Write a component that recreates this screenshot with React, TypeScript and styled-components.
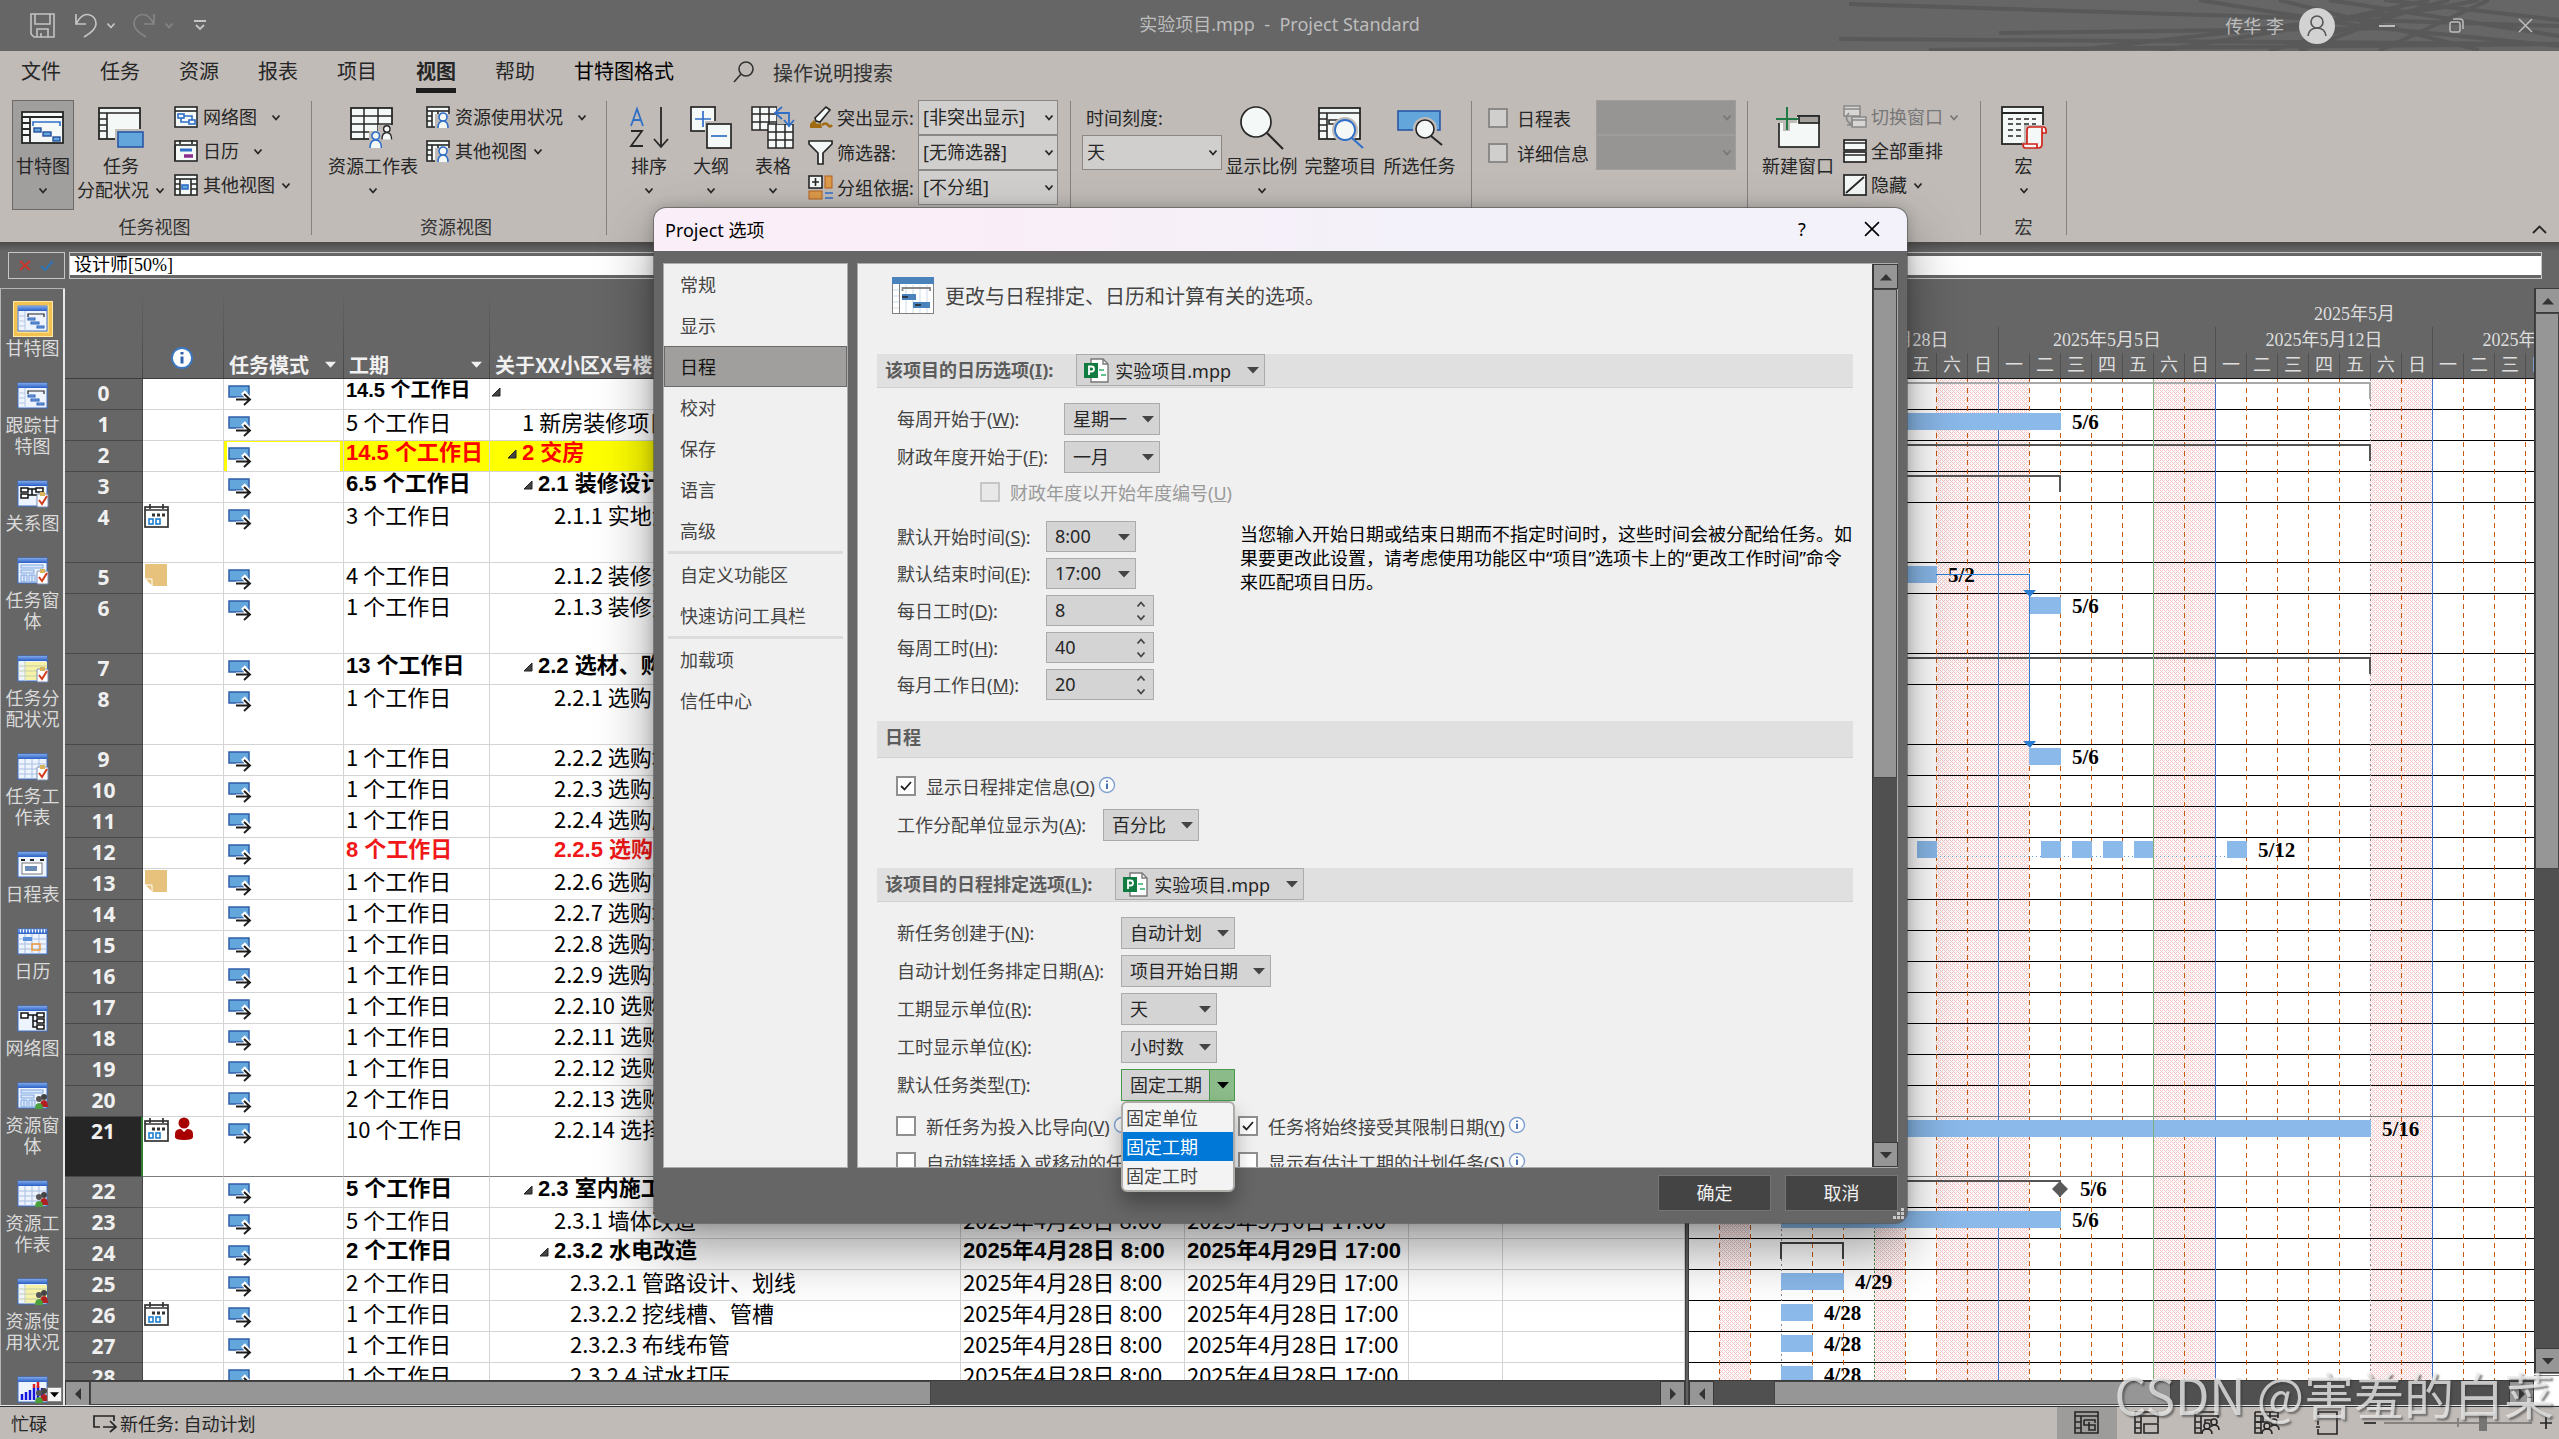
import React, { Fragment, ReactNode, useId } from 'react';
import styled, { createGlobalStyle, css } from 'styled-components';

const ui = '"Noto Sans", "Noto Sans CJK SC", sans-serif';
const sheetFont = '"Noto Sans CJK SC", sans-serif';
const sheetBold = '"Liberation Sans", "Noto Sans CJK SC", sans-serif';
const song = '"Liberation Serif", "Noto Sans CJK SC", serif';

const Global = createGlobalStyle`
  *, *::before, *::after { box-sizing: border-box; }
  html, body { margin: 0; height: 100%; background: #666; }
  body { font-family: ${ui}; font-size: 18px; color: #262626; overflow: hidden; }
  button, input, select { font: inherit; color: inherit; margin: 0; }
  button { border: 0; background: none; padding: 0; cursor: default; }
  svg { display: block; flex: none; }
`;

const App_ = styled.div`
  position: relative;
  height: 100vh;
  min-height: 900px;
  display: flex;
  flex-direction: column;
  background: #666;
  overflow: hidden;
`;

/* ---------- title bar ---------- */

const TitleBar = styled.header`
  position: relative;
  height: 51px;
  flex: none;
  display: grid;
  grid-template-columns: 1fr auto 1fr;
  align-items: center;
  background: #666;
  color: #bdbdbd;
`;
const TitleLines = styled.svg`
  position: absolute;
  right: 0;
  top: 0;
`;
const QuickAccess = styled.div`
  display: flex;
  align-items: center;
  padding-left: 30px;
`;
const QuickButton = styled.button<{ $gap?: number; $dim?: boolean }>`
  margin-right: ${p => p.$gap ?? 8}px;
  color: ${p => (p.$dim ? '#858585' : '#c4c4c4')};
`;
const WindowTitle = styled.h1`
  margin: 0;
  padding-bottom: 4px;
  font-size: 18px;
  font-weight: 400;
  line-height: 24px;
  white-space: pre;
`;
const Account = styled.div`
  position: relative;
  display: flex;
  align-items: center;
  justify-content: flex-end;
  padding-right: 26px;
`;
const AccountName = styled.span`
  margin-right: 15px;
  padding-bottom: 2px;
`;
const WindowButton = styled.button`
  width: 16px;
  height: 24px;
  margin-left: 53px;
  color: #bdbdbd;
  display: flex;
  align-items: center;
  justify-content: center;
  &:first-of-type { margin-left: 44px; }
`;

/* ---------- ribbon ---------- */

const Ribbon = styled.section`
  flex: none;
  height: 191px;
  background: #c0bbb7;
  display: flex;
  flex-direction: column;
`;
const Tabs = styled.nav`
  height: 42px;
  flex: none;
  display: flex;
  align-items: stretch;
  padding-left: 21px;
  font-size: 20px;
`;
const Tab = styled.button<{ $active?: boolean; $dark?: boolean }>`
  margin-right: 39px;
  line-height: 33px;
  padding-top: 4px;
  align-self: flex-start;
  height: 42px;
  font-weight: ${p => (p.$active ? 700 : 400)};
  color: ${p => (p.$dark ? '#000' : '#262626')};
  border-bottom: 5px solid ${p => (p.$active ? '#1c1c1c' : 'transparent')};
`;
const TellMe = styled.button`
  display: flex;
  align-items: center;
  gap: 19px;
  margin-left: 20px;
  color: #333;
`;
const RibbonBody = styled.div`
  flex: 1;
  display: flex;
  padding: 7px 12px 0;
`;
const Group = styled.div<{ $left?: number; $right?: number }>`
  display: flex;
  flex-direction: column;
  align-items: center;
  padding-left: ${p => p.$left ?? 0}px;
  padding-right: ${p => p.$right ?? 0}px;
`;
const GroupBody = styled.div`
  display: flex;
  height: 110px;
  width: 100%;
`;
const GroupName = styled.div`
  margin-top: 6px;
  line-height: 22px;
  color: #333;
`;
const Rule = styled.div`
  width: 1px;
  height: 134px;
  margin-top: 1px;
  background: #858280;
`;
const BigButton = styled.button<{ $w: number; $on?: boolean }>`
  width: ${p => p.$w}px;
  height: 110px;
  padding-top: 6px;
  display: flex;
  flex-direction: column;
  align-items: center;
  line-height: 24px;
  white-space: nowrap;
  ${p => p.$on && css`
    background: #a09f9d;
    box-shadow: inset 0 0 0 1px #6c6b6a;
  `}
`;
const BigIcon = styled.span`
  height: 44px;
  margin-bottom: 4px;
  display: flex;
  align-items: center;
`;
const BigSecond = styled.span`
  display: flex;
  align-items: center;
  gap: 6px;
  height: 24px;
`;
const SmallColumn = styled.div<{ $left: number; $right?: number }>`
  display: flex;
  flex-direction: column;
  padding-left: ${p => p.$left}px;
  padding-right: ${p => p.$right ?? 0}px;
`;
const SmallButton = styled.button<{ $wide?: boolean; $disabled?: boolean }>`
  height: 34px;
  display: flex;
  align-items: center;
  white-space: nowrap;
  color: ${p => (p.$disabled ? '#777' : 'inherit')};
  > span { margin: 0 ${p => (p.$wide ? 14 : 6)}px 2px 4px; }
`;
const FieldLine = styled.div`
  height: 35px;
  display: flex;
  align-items: center;
`;
const FieldLabel = styled.label<{ $w?: number }>`
  margin: 0 0 2px 4px;
  white-space: nowrap;
  width: ${p => (p.$w ? p.$w + 'px' : 'auto')};
`;
const TickLabel = styled.label`
  height: 35px;
  width: 108px;
  display: flex;
  align-items: center;
  gap: 9px;
  white-space: nowrap;
`;
const RibbonTick = styled.input`
  appearance: none;
  width: 20px;
  height: 20px;
  margin: 0;
  background: #d0cfcd;
  border: 2px solid #8c8a88;
`;
const Stack = styled.span`
  display: grid;
  align-items: center;
  > * { grid-area: 1 / 1; }
  > svg { pointer-events: none; }
`;
const ArrowAt = styled.span<{ $right: number }>`
  justify-self: end;
  margin-right: ${p => p.$right}px;
  pointer-events: none;
`;
const RibbonSelect = styled.select`
  appearance: none;
  width: 140px;
  height: 35px;
  padding: 0 20px 2px 4px;
  border: 1px solid #8a8886;
  border-radius: 0;
  background: #d0cfcd;
  &:disabled { background: #979593; border-color: #a09e9c; opacity: 1; }
`;
const CollapseRibbon = styled.button`
  margin-left: auto;
  align-self: flex-end;
  padding-bottom: 8px;
`;

/* ---------- entry bar ---------- */

const EntryBar = styled.div`
  flex: none;
  height: 46px;
  padding: 10px 17px 0 8px;
  display: flex;
  gap: 4px;
  background: linear-gradient(#4c4c4c, #666 9px);
`;
const EntryActions = styled.div`
  width: 57px;
  height: 27px;
  border: 1px solid #c6c6c6;
  display: flex;
  align-items: center;
  justify-content: space-around;
  padding: 0 5px;
`;
const EntryFrame = styled.div`
  flex: 1;
  height: 27px;
  padding: 3px 0;
  border: 1px solid #c6c6c6;
  display: flex;
`;
const EntryInput = styled.input`
  flex: 1;
  border: 0;
  padding: 0 4px;
  background: #fff;
  color: #000;
  font-family: ${song};
  font-size: 18px;
  line-height: 19px;
`;

/* ---------- work area ---------- */

const Work = styled.main`
  flex: 1;
  min-height: 0;
  display: flex;
`;
const ViewBar = styled.nav`
  position: relative;
  flex: none;
  width: 65px;
  padding-top: 16px;
  border: solid #b4b4b4;
  border-width: 1px 0 0 1px;
  box-shadow: inset -2px 0 #e9e9e9;
  overflow: hidden;
  background: #666;
`;
const ViewItem = styled.button<{ $on?: boolean }>`
  width: 63px;
  padding: 0 4px 22px;
  display: flex;
  flex-direction: column;
  align-items: center;
  gap: 6px;
  font-family: ${song};
  font-size: 18px;
  line-height: 21px;
  color: #dadada;
  > svg {
    ${p => p.$on && css`box-shadow: 0 0 0 3px #f3c14f, 0 0 0 4px #fde9a9; background: #fce08a;`}
  }
`;
const ViewMore = styled.button`
  position: absolute;
  right: 3px;
  bottom: 3px;
  width: 15px;
  height: 15px;
  border: 1px solid #888;
  background: #f5f5f5;
  display: flex;
  align-items: center;
  justify-content: center;
`;
const SheetPane = styled.section`
  flex: 0 1 1620px;
  min-width: 0;
  display: flex;
  flex-direction: column;
`;
const Clip = styled.div`
  flex: 1;
  min-height: 0;
  overflow: hidden;
  background: #fff;
`;
const Sheet = styled.table`
  width: 100%;
  table-layout: fixed;
  border-collapse: separate;
  border-spacing: 0;
  font-family: ${sheetFont};
  font-size: 22px;
  line-height: 23px;
  color: #000;
`;
const HeadCell = styled.th`
  height: 91px;
  padding: 0 8px 1px 5px;
  vertical-align: bottom;
  text-align: left;
  font-size: 20px;
  font-weight: 700;
  color: #f0f0f0;
  background: #666;
  border-bottom: 1px solid #3c3c3c;
  background-image: linear-gradient(#666, #484848);
  background-size: 1px 100%;
  background-repeat: no-repeat;
  background-position: right top;
  white-space: nowrap;
`;
const HeadFlex = styled.span<{ $center?: boolean }>`
  display: flex;
  align-items: center;
  justify-content: ${p => (p.$center ? 'center' : 'space-between')};
  min-height: 26px;
  padding-bottom: ${p => (p.$center ? 8 : 0)}px;
`;
const TaskRow = styled.tr<{ $tall?: boolean; $bold?: boolean; $color?: string; $fill?: string; $active?: boolean; $root?: boolean }>`
  > * { height: ${p => (p.$tall ? 60 : 31)}px; }
  > td {
    border-bottom-color: ${p => (p.$active ? '#7c7c7c' : '#d4d4d4')};
    color: ${p => p.$color ?? '#000'};
    font-family: ${p => (p.$bold ? sheetBold : sheetFont)};
    font-weight: ${p => (p.$bold ? 700 : 400)};
    font-size: ${p => (p.$root ? 20 : 22)}px;
    background: ${p => p.$fill ?? '#fff'};
  }
`;
const RowHead = styled.th<{ $active?: boolean }>`
  padding: 2px 0 0;
  vertical-align: top;
  text-align: center;
  font-family: ${ui};
  font-size: 21px;
  font-weight: 700;
  line-height: 25px;
  color: #f0f0f0;
  background: ${p => (p.$active ? '#262626' : '#666')};
  border-bottom: 1px solid #484848;
  border-right: ${p => (p.$active ? '2px solid #2f7d32' : '1px solid #484848')};
`;
const Cell = styled.td<{ $indent?: number }>`
  padding: 0 0 0 ${p => p.$indent ?? 3}px;
  vertical-align: top;
  white-space: nowrap;
  border-right: 1px solid #d4d4d4;
  border-bottom: 1px solid #d4d4d4;
`;
const PlainCell = styled(Cell)`
  && { background: #fff; }
`;
const ModeCell = styled(Cell)<{ $lit?: boolean }>`
  && { background: #fff; }
  ${p => p.$lit && css`box-shadow: inset 3px 1px #ffff00, inset -3px 0 #ffff00;`}
`;
const CellIcons = styled.span<{ $top?: number }>`
  display: flex;
  align-items: flex-start;
  gap: 5px;
  padding-top: ${p => p.$top ?? 0}px;
`;
const NameLine = styled.span`
  display: flex;
  align-items: center;
`;
const Toggle = styled.span`
  width: 14px;
  height: 23px;
  padding-top: 3px;
  display: flex;
  align-items: center;
`;

const HBar = styled.div`
  flex: none;
  height: 25px;
  display: flex;
  background: #505050;
  border-top: 1px solid #3a3a3a;
`;
const VBar = styled.div`
  flex: none;
  width: 25px;
  display: flex;
  flex-direction: column;
  background: #505050;
  border-left: 1px solid #3a3a3a;
`;
const ScrollButton = styled.button`
  flex: none;
  width: 25px;
  height: 25px;
  background: #969696;
  border: 1px solid #3a3a3a;
  display: flex;
  align-items: center;
  justify-content: center;
`;
const Track = styled.div<{ $grow: number; $thumb?: boolean }>`
  flex: ${p => p.$grow} 1 0;
  background: ${p => (p.$thumb ? '#969696' : '#505050')};
  box-shadow: ${p => (p.$thumb ? 'inset 0 0 0 1px #444' : 'none')};
`;
const Splitter = styled.div`
  flex: none;
  width: 4px;
  background: #606060;
  box-shadow: inset 1px 0 #404040, inset -1px 0 #404040;
`;
const GanttPane = styled.section`
  flex: 1;
  min-width: 0;
  display: flex;
`;
const GanttMain = styled.div`
  flex: 1;
  min-width: 0;
  display: flex;
  flex-direction: column;
`;
const GanttSide = styled.div`
  display: flex;
  flex-direction: column;
  > :first-child { flex: 1; }
`;
const SideCorner = styled.div`
  height: 32px;
  background: #fff;
  border-top: 3px double #777;
`;
const Timescale = styled.div`
  flex: none;
  height: 91px;
  padding-top: 13px;
  overflow: hidden;
  background: #666;
  border-bottom: 1px solid #111;
  font-family: ${song};
  color: #dedede;
`;
const ScaleTier = styled.div<{ $h: number; $left?: number }>`
  display: flex;
  height: ${p => p.$h}px;
  line-height: ${p => p.$h}px;
  padding-left: ${p => p.$left ?? 0}px;
`;
const ScaleCell = styled.div<{ $w: number; $tick?: boolean }>`
  flex: none;
  width: ${p => p.$w}px;
  text-align: center;
  white-space: nowrap;
  border-right: ${p => (p.$tick ? '1px solid #505050' : '0')};
`;
const Chart = styled.svg`
  width: 100%;
  height: 1015px;
`;
const BarLabel = styled.text`
  font-family: "Liberation Serif", serif;
  font-size: 21px;
  font-weight: 700;
  fill: #000;
`;

/* ---------- status bar ---------- */

const StatusBar = styled.footer`
  flex: none;
  height: 34px;
  display: flex;
  align-items: center;
  padding-left: 10px;
  background: #c0bbb7;
  border-top: 1px solid #e8e8e8;
  box-shadow: inset 0 1px #333;
`;
const StatusText = styled.span<{ $right?: number }>`
  margin-right: ${p => p.$right ?? 0}px;
  margin-left: 1px;
  white-space: nowrap;
`;
const StatusViews = styled.div`
  margin-left: auto;
  display: flex;
  align-self: stretch;
  padding-top: 1px;
`;
const StatusView = styled.button<{ $on?: boolean }>`
  width: 60px;
  display: flex;
  align-items: center;
  justify-content: center;
  background: ${p => (p.$on ? '#9e9c9a' : 'transparent')};
`;
const Zoom = styled.div`
  display: flex;
  align-items: center;
  gap: 8px;
  padding: 0 7px 0 7px;
`;
const ZoomRange = styled.input`
  appearance: none;
  width: 148px;
  height: 18px;
  background: linear-gradient(#85827f, #85827f) center / 100% 2px no-repeat,
    linear-gradient(#85827f, #85827f) center / 2px 9px no-repeat;
  &::-webkit-slider-thumb { appearance: none; width: 8px; height: 17px; background: #777573; }
`;
const Watermark = styled.div`
  position: absolute;
  right: 5px;
  bottom: 11px;
  font-family: ${sheetFont};
  font-size: 50px;
  line-height: 70px;
  color: rgba(235, 235, 235, 0.78);
  text-shadow: 2px 2px 2px rgba(60, 60, 60, 0.6);
  white-space: nowrap;
  pointer-events: none;
`;

/* ---------- dialog ---------- */

const Overlay = styled.div`
  position: absolute;
  inset: 0;
  display: flex;
  align-items: center;
  justify-content: center;
  padding: 0 0 8px 2px;
`;
const Dialog = styled.div`
  position: relative;
  width: 1253px;
  height: 1015px;
  display: flex;
  flex-direction: column;
  border-radius: 12px;
  background: #666;
  box-shadow: 0 0 0 1px rgba(80, 80, 80, 0.6), 0 26px 56px rgba(0, 0, 0, 0.4), 0 0 14px rgba(0, 0, 0, 0.2);
`;
const DialogTitle = styled.div`
  flex: none;
  height: 43px;
  display: flex;
  align-items: center;
  padding: 0 26px 2px 11px;
  border-radius: 12px 12px 0 0;
  background: linear-gradient(90deg, #faeef8 0 24%, #f3f1f9 60%);
  color: #000;
`;
const DialogName = styled.h2`
  margin: 0 auto 0 0;
  font-size: 18px;
  font-weight: 400;
`;
const DialogButton = styled.button`
  width: 18px;
  margin-left: 52px;
  display: flex;
  justify-content: center;
`;
const DialogBody = styled.div`
  height: 917px;
  padding: 12px 9px 0;
  display: flex;
  gap: 9px;
`;
const Nav = styled.nav`
  width: 185px;
  border: 1px solid #ababab;
  background: #f0f0f0;
  display: flex;
  flex-direction: column;
  color: #444;
`;
const NavItem = styled.button<{ $on?: boolean }>`
  height: 41px;
  padding: 0 0 2px 16px;
  text-align: left;
  ${p => p.$on && css`
    background: #a09f9d;
    box-shadow: inset 0 0 0 1px #6a6a6a;
    color: #111;
  `}
`;
const NavRule = styled.hr`
  height: 3px;
  margin: 0 4px;
  border: 0;
  background: #dcdcdc;
`;
const Panel = styled.div`
  flex: 1;
  min-width: 0;
  display: flex;
  border: 1px solid #ababab;
  background: #f0f0f0;
`;
const PanelScroll = styled.div`
  flex: 1;
  min-width: 0;
  overflow: hidden;
  padding: 13px 19px 0;
  color: #444;
`;
const Intro = styled.div`
  display: flex;
  align-items: center;
  gap: 11px;
  margin: 0 0 40px 15px;
  height: 37px;
  font-size: 20px;
`;
const Section = styled.div<{ $h: number; $top?: number }>`
  height: ${p => p.$h}px;
  margin-top: ${p => p.$top ?? 0}px;
  padding-left: 8px;
  display: flex;
  align-items: flex-start;
  gap: 23px;
  background: #e0e0e0;
  border-bottom: 1px solid #d2d2d2;
  color: #5c5c5c;
  line-height: 32px;
`;
const SectionLabel = styled.label`
  font-weight: 700;
`;
const SectionTitle = styled.h3`
  margin: 0;
  font-size: 18px;
  font-weight: 700;
`;
const Fields = styled.div<{ $top: number }>`
  display: flex;
  flex-direction: column;
  gap: 6px;
  padding-left: 20px;
  padding-top: ${p => p.$top}px;
`;
const Field = styled.div<{ $label: number }>`
  display: grid;
  grid-template-columns: ${p => p.$label}px auto;
  justify-content: start;
  align-items: center;
  > label { padding-bottom: 2px; }
`;
const FieldSplit = styled.div`
  display: flex;
  justify-content: space-between;
`;
const Note = styled.p`
  margin: 20px 0 0;
  width: 613px;
  line-height: 24px;
  color: #000;
`;
const Drop = styled.select<{ $w: number; $h: number; $icon?: boolean; $open?: boolean }>`
  appearance: none;
  width: ${p => p.$w}px;
  height: ${p => p.$h}px;
  padding: 0 20px 1px ${p => (p.$icon ? 38 : 8)}px;
  border: 1px solid ${p => (p.$open ? '#479a4b' : '#ababab')};
  border-radius: 0;
  background: ${p => (p.$open ? 'linear-gradient(90deg, #d4d4d4 calc(100% - 25px), #479a4b calc(100% - 25px) calc(100% - 24px), #8abb88 calc(100% - 24px))' : '#d4d4d4')};
  color: #262626;
  font-weight: 400;
`;
const IconAt = styled.span`
  margin-left: 8px;
  pointer-events: none;
`;
const Spin = styled.input`
  appearance: textfield;
  width: 108px;
  height: 31px;
  padding: 0 24px 1px 8px;
  border: 1px solid #ababab;
  background: #d4d4d4;
  color: #262626;
  &::-webkit-inner-spin-button { display: none; }
`;
const CheckLine = styled.div<{ $top: number; $left?: number }>`
  display: flex;
  margin: ${p => p.$top}px 0 0 ${p => p.$left ?? 19}px;
`;
const CheckItem = styled.label<{ $w?: number; $disabled?: boolean }>`
  width: ${p => (p.$w ? p.$w + 'px' : 'auto')};
  height: 20px;
  display: flex;
  align-items: center;
  white-space: nowrap;
  color: ${p => (p.$disabled ? '#999' : '#444')};
  > span:nth-of-type(2) { margin: 0 3px 0 10px; }
`;
const Box = styled.input`
  appearance: none;
  width: 20px;
  height: 20px;
  border: 2px solid #8f8f8f;
  background: #fff;
  &:disabled { background: #e8e8e8; border-color: #c6c6c6; }
`;
const Tip = styled.span`
  align-self: flex-start;
`;
const PopupAnchor = styled.div`
  display: flex;
  flex-direction: column;
`;
const Popup = styled.div`
  position: absolute;
  margin-top: 32px;
  width: 114px;
  padding: 0;
  border: 2px solid #aeaca9;
  border-radius: 6px;
  background: #f3f3f3;
  box-shadow: 0 12px 20px rgba(0, 0, 0, 0.3);
  display: flex;
  flex-direction: column;
  z-index: 2;
`;
const PopupOption = styled.button<{ $on?: boolean }>`
  height: 29px;
  padding: 0 0 2px 3px;
  text-align: left;
  background: ${p => (p.$on ? '#0078d7' : 'transparent')};
  color: ${p => (p.$on ? '#fff' : '#444')};
`;
const DialogFooter = styled.div`
  display: flex;
  justify-content: flex-end;
  gap: 14px;
  padding: 7px 9px 0;
`;
const FooterButton = styled.button`
  width: 113px;
  height: 36px;
  padding-bottom: 2px;
  background: #444;
  border: 1px solid #757575;
  color: #f0f0f0;
`;
const Grip = styled.svg`
  position: absolute;
  right: 2px;
  bottom: 3px;
`;

/* ---------- glyphs ---------- */

const INK = '#262626';
const PAPER = '#f4f8f7';
const BLUE = '#2f6fc8';

const Caret = ({ c = 'currentColor', up = false }: { c?: string; up?: boolean }) => (
  <svg width="10" height="7" viewBox="0 0 10 7">
    <path d={up ? 'M1.5 5.5 5 1.5 8.5 5.5' : 'M1.5 1.5 5 5.5 8.5 1.5'} fill="none" stroke={c} strokeWidth="1.8" />
  </svg>
);
const Tri = ({ dir = 'down', c = '#333', s = 12 }: { dir?: string; c?: string; s?: number }) => {
  const d: Record<string, string> = { down: 'M0 3H12L6 9.5Z', up: 'M0 9.5H12L6 3Z', left: 'M9 0V12L3 6Z', right: 'M3 0V12L9 6Z' };
  return <svg width={s} height={s} viewBox="0 0 12 12"><path d={d[dir]} fill={c} /></svg>;
};
const Cross = ({ s = 15 }: { s?: number }) => (
  <svg width={s} height={s} viewBox="0 0 15 15"><path d="M1 1 14 14M14 1 1 14" stroke="currentColor" strokeWidth="1.5" /></svg>
);

const GanttBig = () => (
  <svg width="44" height="34" viewBox="0 0 44 34">
    <rect x="1" y="1" width="41" height="31" fill={PAPER} stroke={INK} strokeWidth="1.8" />
    <path d="M1 6H42M9 6V32M1 12H9M1 18H9M1 24H9" stroke={INK} strokeWidth="1.8" fill="none" />
    <path d="M12 15V11H39V15" fill="none" stroke={BLUE} strokeWidth="1.6" />
    <g fill="#62a6dc" stroke="#24509c" strokeWidth="1.4"><rect x="13" y="17" width="7" height="4" /><rect x="22" y="21" width="8" height="4" /><rect x="32" y="26" width="7" height="4" /></g>
  </svg>
);
const UsageBig = () => (
  <svg width="46" height="42" viewBox="0 0 46 42">
    <rect x="1" y="1" width="41" height="31" fill={PAPER} stroke={INK} strokeWidth="1.8" />
    <path d="M1 6H42M9 6V32M1 12H9M1 18H9M1 24H9" stroke={INK} strokeWidth="1.6" />
    <path d="M17 22H46V42H17Z" fill="#c0bbb7" /><rect x="20" y="25" width="25" height="15" fill="#62a6dc" stroke="#2a58a5" strokeWidth="1.6" />
  </svg>
);
const People = ({ x, y, c, s = 1 }: { x: number; y: number; c: string; s?: number }) => (
  <g transform={`translate(${x} ${y}) scale(${s})`} fill={PAPER} stroke={c} strokeWidth="1.7">
    <circle cx="6" cy="5" r="4" /><path d="M0 18C0 12 2 9.500 6 9.500S12 12 12 18" />
  </g>
);
const ResourceSheetBig = () => (
  <svg width="46" height="42" viewBox="0 0 46 42">
    <rect x="1" y="1" width="41" height="31" fill={PAPER} stroke={INK} strokeWidth="1.8" />
    <path d="M1 9H42M1 17H42M1 25H42M14 1V32M28 1V32" stroke={INK} strokeWidth="1.5" />
    <path d="M19 24H28V18H46V42H19Z" fill="#c0bbb7" />
    <People x={32} y={18} c={INK} s={0.8} /><People x={20} y={24} c={BLUE} s={0.95} />
  </svg>
);
const SortBig = () => (
  <svg width="42" height="44" viewBox="0 0 42 44" fill="none" strokeWidth="1.8">
    <path d="M3 20 9 3 15 20M5 14H13" stroke={BLUE} /><path d="M3 25H14L3 40H15" stroke={INK} />
    <path d="M33 1V41M26 33 33 41 40 33" stroke={INK} />
  </svg>
);
const OutlineBig = () => (
  <svg width="44" height="44" viewBox="0 0 44 44" strokeWidth="1.7">
    <rect x="2" y="1" width="24" height="24" fill={PAPER} stroke={INK} /><path d="M14 5V21M6 13H22" stroke={BLUE} />
    <path d="M16 15H30V44H16Z" fill="#c0bbb7" /><rect x="18" y="18" width="24" height="24" fill={PAPER} stroke={INK} /><path d="M22 30H38" stroke={BLUE} />
  </svg>
);
const TablesBig = () => (
  <svg width="44" height="44" viewBox="0 0 44 44" strokeWidth="1.5">
    <rect x="1" y="1" width="25" height="23" fill={PAPER} stroke={INK} /><path d="M1 8H26M1 16H26M9 1V24M18 1V24" stroke={INK} />
    <rect x="17" y="18" width="25" height="24" fill={PAPER} stroke={INK} /><path d="M17 26H42M17 34H42M25 18V42M34 18V42" stroke={INK} />
    <path d="M26 0H44V18H26Z" fill="#c0bbb7" /><path d="M24 7H38V19M31 1 24 7 31 13M33 14 38 20 43 14" fill="none" stroke={BLUE} strokeWidth="1.8" />
  </svg>
);
const ZoomBig = () => (
  <svg width="46" height="46" viewBox="0 0 46 46"><circle cx="17" cy="17" r="15" fill={PAPER} stroke={INK} strokeWidth="1.7" /><path d="M28 28 44 44" stroke={INK} strokeWidth="2" /></svg>
);
const WholeBig = () => (
  <svg width="46" height="42" viewBox="0 0 46 42">
    <rect x="1" y="1" width="41" height="31" fill={PAPER} stroke={INK} strokeWidth="1.8" />
    <path d="M1 6H42M9 6V32M1 12H9M1 18H9M1 24H9M11 13H20V17H11Z" stroke={INK} strokeWidth="1.6" fill="none" />
    <circle cx="27" cy="23" r="13" fill="#c0bbb7" /><circle cx="27" cy="23" r="10" fill={PAPER} stroke={BLUE} strokeWidth="1.8" /><path d="M34 31 45 41" stroke={BLUE} strokeWidth="2" />
  </svg>
);
const SelectedBig = () => (
  <svg width="46" height="36" viewBox="0 0 46 36">
    <rect x="1" y="1" width="42" height="19" fill="#62a6dc" stroke="#2a58a5" strokeWidth="1.6" />
    <circle cx="28" cy="19" r="12" fill="#c0bbb7" /><circle cx="28" cy="19" r="9" fill={PAPER} stroke={INK} strokeWidth="1.6" /><path d="M34 26 45 35" stroke={INK} strokeWidth="2" />
  </svg>
);
const NewWindowBig = () => (
  <svg width="46" height="42" viewBox="0 0 46 42">
    <rect x="4" y="9" width="40" height="31" fill={PAPER} stroke={INK} strokeWidth="1.7" /><rect x="24" y="9" width="20" height="7" fill="#a5a19e" stroke={INK} strokeWidth="1.7" />
    <path d="M0 0H22V16H15V24H8V16H0Z" fill="#c0bbb7" /><path d="M12 0V23M1 12H23" stroke="#1f7a45" strokeWidth="2" />
  </svg>
);
const MacroBig = () => (
  <svg width="46" height="44" viewBox="0 0 46 44">
    <rect x="1" y="1" width="41" height="37" fill={PAPER} stroke={INK} strokeWidth="1.8" /><path d="M1 7H42" stroke={INK} strokeWidth="2" />
    <path d="M7 13H35M7 18H35M7 24H35M7 30H22" stroke={INK} strokeWidth="1.6" strokeDasharray="5 3" />
    <path d="M23 19H46V44H21V36H23Z" fill="#c0bbb7" /><path d="M26 38V24Q26 21 29 21H42Q45 21 45 24V27H41V38Q41 42 37 42H24Q22 42 22 38H36V42M41 27V22" fill={PAPER} stroke="#d0241b" strokeWidth="1.7" />
  </svg>
);

const SmallFrame = ({ children, top = 5 }: { children?: ReactNode; top?: number }) => (
  <svg width="25" height="23" viewBox="0 0 25 23" strokeWidth="1.6" fill="none">
    <rect x="1" y="1" width="22" height="20" fill={PAPER} stroke={INK} /><path d={`M1 ${top}H23`} stroke={INK} />{children}
  </svg>
);
const NetSmall = () => <SmallFrame><g stroke={BLUE}><rect x="4" y="8" width="6" height="4" /><rect x="15" y="14" width="6" height="4" /><path d="M7 12V16H15M10 10H18V14" /></g></SmallFrame>;
const CalSmall = () => <SmallFrame><path d="M6 0V4M18 0V4M1 5V21" stroke={INK} /><path d="M6 10H18" stroke={BLUE} strokeWidth="3" /><path d="M10 16H19" stroke="#8a2d8f" strokeWidth="3.500" /></SmallFrame>;
const OtherSmall = () => <SmallFrame><path d="M6 5V21M17 5V21M17 10H23M17 15H23M1 10H6M1 15H6" stroke={INK} /><rect x="8" y="11" width="6" height="4" fill="#62a6dc" stroke={BLUE} /></SmallFrame>;
const ResSmall = () => <SmallFrame><path d="M6 5V21M1 10H6M1 15H6M12 5V9" stroke={INK} /><path d="M9 8H25V23H9Z" fill="#c0bbb7" /><g transform="translate(11 7)" stroke={BLUE} fill={PAPER}><circle cx="6" cy="4" r="4" /><path d="M1 15C1 10 3 8 6 8S11 10 11 15" /></g></SmallFrame>;
const HighlightSmall = () => (
  <svg width="25" height="23" viewBox="0 0 25 23"><path d="M2 22V18L6 14 9 18 13 17 14 22Z" fill="#a06a10" /><path d="M14 19Q18 16 20 19T24 19" stroke="#a06a10" strokeWidth="2.500" fill="none" /><path d="M7 12 18 1 22 4 12 16 8 15Z" fill={PAPER} stroke={INK} strokeWidth="1.6" /></svg>
);
const FunnelSmall = () => <svg width="25" height="25" viewBox="0 0 25 25"><path d="M1 1H24V4L15 13V24H10V13L1 4Z" fill={PAPER} stroke={INK} strokeWidth="1.7" /></svg>;
const GroupSmall = () => (
  <svg width="25" height="25" viewBox="0 0 25 25"><rect x="1" y="1" width="13" height="12" fill={PAPER} stroke={INK} strokeWidth="1.6" /><path d="M7.500 3V11M4 7H11" stroke={INK} strokeWidth="1.6" />
    <rect x="17" y="1" width="7" height="12" fill="#dc9a4a" stroke="#b5601a" /><rect x="1" y="16" width="13" height="8" fill="#dc9a4a" stroke="#b5601a" /><path d="M17 18H25M17 23H25" stroke={BLUE} strokeWidth="1.6" /></svg>
);
const SwitchSmall = () => (
  <svg width="24" height="24" viewBox="0 0 24 24" stroke="#888" strokeWidth="1.5" fill="#d8d6d4"><rect x="1" y="1" width="16" height="10" /><path d="M1 4H17" /><rect x="9" y="12" width="14" height="10" /><path d="M9 15H23M6 8Q0 14 8 19M4 20H9V15" fill="none" /></svg>
);
const ArrangeSmall = () => <svg width="24" height="24" viewBox="0 0 24 24" stroke={INK} strokeWidth="1.7" fill={PAPER}><rect x="1" y="1" width="22" height="10" /><rect x="1" y="13" width="22" height="10" /><path d="M1 4H23M1 16H23" /></svg>;
const HideSmall = () => <svg width="24" height="22" viewBox="0 0 24 22" stroke={INK} strokeWidth="1.7" fill={PAPER}><rect x="1" y="1" width="22" height="20" /><path d="M3 19 21 3" /></svg>;

const ModeIcon = () => (
  <svg width="24" height="22" viewBox="0 0 24 22">
    <rect x="1" y="2" width="20" height="11" fill="#62a6dc" stroke="#2f5ea8" strokeWidth="1.5" />
    <path d="M8 16H20M15 8 22 16 16 21" stroke="#fff" strokeWidth="5" fill="none" /><path d="M8 15.500H22M16 10 22 15.500 16 21" stroke="#1c1c1c" strokeWidth="1.9" fill="none" />
  </svg>
);
const CalendarMark = () => (
  <svg width="25" height="25" viewBox="0 0 25 25" fill="none"><rect x="1" y="4" width="23" height="20" fill="#fff" stroke="#333" strokeWidth="1.700" /><path d="M1 7H24M6 1V6M19 1V6" stroke="#333" strokeWidth="1.700" />
    <path d="M8 12H11M13 12H16M18 12H21" stroke="#333" strokeWidth="3" /><rect x="5" y="16" width="4" height="5" stroke="#1f7fd0" strokeWidth="1.600" /><rect x="12" y="16" width="4" height="5" stroke="#1f7fd0" strokeWidth="1.600" /></svg>
);
const NoteMark = () => <svg width="24" height="24" viewBox="0 0 24 24"><path d="M1 1H23V23H9L1 15Z" fill="#e6c27c" /><path d="M1 16H8V23Z" fill="#e6c27c" stroke="#fff" /></svg>;
const PersonMark = () => <svg width="20" height="24" viewBox="0 0 20 24" fill="#a80000"><circle cx="10" cy="6" r="5.500" /><path d="M1 20V17Q1 12 7 12L10 15 13 12Q19 12 19 17V20Q19 23 10 23T1 20Z" /></svg>;
const InfoDot = ({ r = 11 }: { r?: number }) => (
  <svg width={r * 2} height={r * 2} viewBox="0 0 22 22"><circle cx="11" cy="11" r="10" fill="#fff" stroke="#3b78c4" strokeWidth="1.800" /><path d="M11 9.500V16.500M11 5V7.500" stroke="#2f62ad" strokeWidth="3" /></svg>
);
const TipDot = () => <svg width="18" height="18" viewBox="0 0 18 18"><circle cx="9" cy="9" r="7.500" fill="#fff" stroke="#7e9fd0" strokeWidth="1.400" /><path d="M9 7.500V13M9 4.500V6" stroke="#3b62a8" strokeWidth="1.800" /></svg>;
const ProjectDoc = () => (
  <svg width="25" height="25" viewBox="0 0 25 25"><path d="M7 1H19L24 6V24H7Z" fill="#fff" stroke="#777" strokeWidth="1.400" /><path d="M19 1V6H24" fill="none" stroke="#777" strokeWidth="1.400" /><path d="M15 12H20M17 17H22" stroke="#2fae6b" strokeWidth="1.600" /><rect x="0" y="5" width="14" height="15" fill="#107c41" />
    <path d="M5 17V8.500H7.500Q10 8.500 10 11T7.500 13.500H5" fill="none" stroke="#fff" strokeWidth="1.800" /></svg>
);
const IntroIcon = () => (
  <svg width="42" height="37" viewBox="0 0 42 37"><rect x="0.500" y="0.500" width="41" height="36" fill="#fff" stroke="#808080" /><rect width="42" height="7" fill="#4a82bb" /><path d="M7.500 7V36" stroke="#808080" /><path d="M1 13H7M1 19H7M1 25H7M1 31H7M14 8V36M21 8V36M28 8V36M35 8V36" stroke="#cfdbea" />
    <path d="M10.500 14V11H38V14" fill="none" stroke="#888" strokeWidth="1.800" /><rect x="10" y="17" width="14" height="6" fill="#4a82bb" /><rect x="21" y="25" width="17" height="6" fill="#4a82bb" /><path d="M10 20H16M23 28H29" stroke="#222" strokeWidth="1.500" /></svg>
);

const ViewIcon = ({ kind }: { kind: string }) => {
  const uid = useId().replace(/:/g, '');
  const overlay = kind.split('-')[1];
  const base = kind.split('-')[0];
  return (
    <svg width="32" height="28" viewBox="0 0 32 28">
      <defs><linearGradient id={uid} x1="0" y1="0" x2="0" y2="1"><stop offset="0" stopColor="#7ea7ea" /><stop offset="1" stopColor="#2a5fc4" /></linearGradient></defs>
      <rect x="1" y="1" width="29" height="25" fill="#eef4fd" stroke="#3e6fc6" /><rect x="1" y="1" width="29" height="5" fill={`url(#${uid})`} />
      {base === 'gantt' && <g><path d="M8 6V26M1 11H8M1 16H8M1 21H8" stroke="#b5c6e4" /><path d="M11 12V9H27V12" fill="none" stroke="#222" strokeWidth="1.200" /><g fill="#7aa7e6" stroke="#2c62b8"><rect x="11" y="13" width="7" height="2" /><rect x="14" y="17" width="8" height="2" /><rect x="20" y="21" width="7" height="2" /></g></g>}
      {base === 'net' && <g fill="#fff" stroke="#111" strokeWidth="1.500"><path d="M10 10H16M16 10V22H20M16 10H20M16 16H20" fill="none" /><rect x="4" y="8" width="7" height="5" /><rect x="20" y="8" width="7" height="4" /><rect x="20" y="14" width="7" height="4" /><rect x="20" y="20" width="7" height="4" /></g>}
      {base === 'rel' && <g fill="#fff" stroke="#111" strokeWidth="1.500"><path d="M11 9H20M15 9V15M11 15H20" fill="none" /><rect x="4" y="8" width="7" height="4" /><rect x="4" y="14" width="7" height="4" /><rect x="19" y="8" width="7" height="4" /></g>}
      {base === 'form' && <g stroke="#7fa6e0" fill="#dce9fb"><rect x="4" y="8" width="22" height="3" /><rect x="4" y="13" width="13" height="3" /><path d="M4 18H10V25H4ZM12 18H18V25H12ZM7 18V25M15 18V25" /></g>}
      {base === 'usage' && <g><rect x="9" y="7" width="21" height="18" fill="#f7f3a6" /><path d="M8 6V26M1 11H30M1 16H30M1 21H30" stroke="#c5cfa8" /></g>}
      {base === 'table' && <path d="M1 11H30M1 16H30M1 21H30M8 6V26M15 6V26M22 6V26" stroke="#a9bfe2" />}
      {base === 'line' && <g><path d="M4 9H8M13 9H17M23 9H27" stroke="#222" strokeWidth="2" /><rect x="5" y="12" width="20" height="11" fill="#fff" stroke="#777" /><rect x="8" y="15" width="12" height="5" fill="#6c8cb8" /></g>}
      {base === 'cal' && <g><path d="M1 11H30M1 16H30M1 21H30M8 6V26M15 6V26M22 6V26" stroke="#a9bfe2" /><rect x="6" y="9" width="9" height="4" fill="#5f93e0" /><rect x="15" y="16" width="8" height="6" fill="none" stroke="#ef9a3c" strokeWidth="1.500" /><path d="M3 3H30" stroke="#fff" strokeWidth="3" strokeDasharray="1 2" /></g>}
      {base === 'graph' && <g strokeWidth="2.500"><path d="M5 18V24M9 16V24M13 14V24M17 12V24M21 10V24M25 12V24" stroke="#1414e0" /><path d="M17 8V12M21 6V12" stroke="#e02020" /></g>}
      {overlay === 'task' && <g><rect x="20" y="14" width="11" height="13" rx="1" fill="#fff" stroke="#7a8db5" /><rect x="23" y="12" width="5" height="4" fill="#d8b45a" /><path d="M22 20 25 24 30 16" fill="none" stroke="#d13a1c" strokeWidth="2" /></g>}
      {overlay === 'res' && <g><circle cx="27" cy="15" r="3" fill="#444" /><path d="M23 25Q23 18 27 18T31 25Z" fill="#b02020" /><circle cx="22" cy="17" r="3" fill="#555" /><path d="M18 27Q18 21 22 21T26 27Z" fill="#4aa03c" /></g>}
    </svg>
  );
};

const StatusIcon = ({ k }: { k: number }) => (
  <svg width="26" height="24" viewBox="0 0 26 24" fill="none" stroke={INK} strokeWidth="1.600">
    {k === 0 && <path d="M1 1H24V22H1ZM1 5H24M7 5V22M1 11H7M1 17H7M10 9H21V12M10 9V14H15V11M15 14H21V19H15Z" />}
    {k > 0 && k < 4 && <path d="M1 1H24M1 5H24M1 1V22H7V5M1 11H7M1 17H7M24 1V7" />}
    {k === 1 && <path d="M24 7V12M10 13H24V22H10Z" />}
    {k === 2 && <path d="M11 12V9H17" />}
    {k === 3 && <path d="M9 1V11M16 1V11M1 11H16" />}
    {(k === 2 || k === 3) && <g><circle cx="13" cy="15" r="3" /><path d="M8 23Q8 18 13 18T18 23" /><circle cx="20" cy="11" r="3" /><path d="M17 16Q18 14 20 14Q25 14 25 19" /></g>}
    {k === 4 && <path d="M4 1H23V23H4V18M4 14V10M4 6V1M2 6H6M2 16H6" />}
  </svg>
);

/* ---------- data ---------- */

type Task = {
  id: number; dur: string; name: string; indent: number; parent?: boolean; tall?: boolean; bold?: boolean;
  color?: string; fill?: string; start?: string; end?: string; marks?: string[];
};
const tasks: Task[] = [
  { id: 0, dur: '14.5 个工作日', name: '', indent: 0, parent: true, bold: true },
  { id: 1, dur: '5 个工作日', name: '1 新房装修项目', indent: 1 },
  { id: 2, dur: '14.5 个工作日', name: '2 交房', indent: 1, parent: true, bold: true, color: '#f00', fill: '#ffff00' },
  { id: 3, dur: '6.5 个工作日', name: '2.1 装修设计', indent: 2, parent: true, bold: true },
  { id: 4, dur: '3 个工作日', name: '2.1.1 实地测量', indent: 3, tall: true, marks: ['cal'] },
  { id: 5, dur: '4 个工作日', name: '2.1.2 装修方案', indent: 3, marks: ['note'] },
  { id: 6, dur: '1 个工作日', name: '2.1.3 装修方案', indent: 3, tall: true },
  { id: 7, dur: '13 个工作日', name: '2.2 选材、购买', indent: 2, parent: true, bold: true },
  { id: 8, dur: '1 个工作日', name: '2.2.1 选购电器', indent: 3, tall: true },
  { id: 9, dur: '1 个工作日', name: '2.2.2 选购地板', indent: 3 },
  { id: 10, dur: '1 个工作日', name: '2.2.3 选购卫浴', indent: 3 },
  { id: 11, dur: '1 个工作日', name: '2.2.4 选购厨具', indent: 3 },
  { id: 12, dur: '8 个工作日', name: '2.2.5 选购灯具', indent: 3, bold: true, color: '#f01818' },
  { id: 13, dur: '1 个工作日', name: '2.2.6 选购窗帘', indent: 3, marks: ['note'] },
  { id: 14, dur: '1 个工作日', name: '2.2.7 选购地砖', indent: 3 },
  { id: 15, dur: '1 个工作日', name: '2.2.8 选购墙纸', indent: 3 },
  { id: 16, dur: '1 个工作日', name: '2.2.9 选购室门', indent: 3 },
  { id: 17, dur: '1 个工作日', name: '2.2.10 选购家具', indent: 3 },
  { id: 18, dur: '1 个工作日', name: '2.2.11 选购五金', indent: 3 },
  { id: 19, dur: '1 个工作日', name: '2.2.12 选购饰品', indent: 3 },
  { id: 20, dur: '2 个工作日', name: '2.2.13 选购油漆', indent: 3 },
  { id: 21, dur: '10 个工作日', name: '2.2.14 选择', indent: 3, tall: true, marks: ['cal', 'person'] },
  { id: 22, dur: '5 个工作日', name: '2.3 室内施工', indent: 2, parent: true, bold: true },
  { id: 23, dur: '5 个工作日', name: '2.3.1 墙体改造', indent: 3, start: '2025年4月28日 8:00', end: '2025年5月6日 17:00' },
  { id: 24, dur: '2 个工作日', name: '2.3.2 水电改造', indent: 3, parent: true, bold: true, start: '2025年4月28日 8:00', end: '2025年4月29日 17:00' },
  { id: 25, dur: '2 个工作日', name: '2.3.2.1 管路设计、划线', indent: 4, start: '2025年4月28日 8:00', end: '2025年4月29日 17:00' },
  { id: 26, dur: '1 个工作日', name: '2.3.2.2 挖线槽、管槽', indent: 4, start: '2025年4月28日 8:00', end: '2025年4月28日 17:00', marks: ['cal'] },
  { id: 27, dur: '1 个工作日', name: '2.3.2.3 布线布管', indent: 4, start: '2025年4月28日 8:00', end: '2025年4月28日 17:00' },
  { id: 28, dur: '1 个工作日', name: '2.3.2.4 试水打压', indent: 4, start: '2025年4月28日 8:00', end: '2025年4月28日 17:00' },
];
const rowTop: number[] = [];
tasks.reduce((y, t) => { rowTop.push(y); return y + (t.tall ? 60 : 31); }, 0);

/* days are counted from Monday 28 April; one day is 31px wide */
const DAY = 31;
const dx = (n: number) => 92 + DAY * n;
const holidays: [number, number][] = [[-2, 1], [3, 1], [5, 3], [12, 2], [19, 2]];
const bars: { row: number; from: number; to: number; label?: string }[] = [
  { row: 1, from: 0, to: 9, label: '5/6' },
  { row: 5, from: 0, to: 5, label: '5/2' },
  { row: 6, from: 8, to: 9, label: '5/6' },
  { row: 9, from: 8, to: 9, label: '5/6' },
  { row: 12, from: 4.4, to: 5 }, { row: 12, from: 8.4, to: 9 }, { row: 12, from: 9.4, to: 10 },
  { row: 12, from: 10.4, to: 11 }, { row: 12, from: 11.4, to: 12 }, { row: 12, from: 14.4, to: 15, label: '5/12' },
  { row: 21, from: 0, to: 19, label: '5/16' },
  { row: 23, from: 0, to: 9, label: '5/6' },
  { row: 25, from: 0, to: 2, label: '4/29' },
  { row: 26, from: 0, to: 1, label: '4/28' }, { row: 27, from: 0, to: 1, label: '4/28' }, { row: 28, from: 0, to: 1, label: '4/28' },
];
const summaries = [
  { row: 0, from: 0, to: 19, c: '#a9a9a9' }, { row: 2, from: 0, to: 19, c: '#555' }, { row: 3, from: 0, to: 9, c: '#555' },
  { row: 7, from: 0, to: 19, c: '#555' }, { row: 22, from: 0, to: 9, c: '#555' }, { row: 24, from: 0, to: 2, c: '#444' },
];

const views: [string, string][] = [
  ['甘特图', 'gantt'], ['跟踪甘特图', 'gantt'], ['关系图', 'rel-task'], ['任务窗体', 'form-task'], ['任务分配状况', 'usage-task'],
  ['任务工作表', 'table-task'], ['日程表', 'line'], ['日历', 'cal'], ['网络图', 'net'], ['资源窗体', 'form-res'],
  ['资源工作表', 'table-res'], ['资源使用状况', 'usage-res'],
];

/* ---------- composed parts ---------- */

const Key = ({ text }: { text: string }) => {
  const m = text.match(/^(.*\()(\w)(\).*)$/);
  return m ? <>{m[1]}<u>{m[2]}</u>{m[3]}</> : <>{text}</>;
};

const Big = ({ icon, label, second, w, on, caret }: { icon: ReactNode; label: string; second?: string; w: number; on?: boolean; caret?: boolean }) => (
  <BigButton $w={w} $on={on}>
    <BigIcon>{icon}</BigIcon>
    <span>{label}</span>
    {(caret || second) && <BigSecond>{second}<Caret /></BigSecond>}
  </BigButton>
);
const Small = ({ icon, label, wide, caret = true, disabled }: { icon: ReactNode; label: string; wide?: boolean; caret?: boolean; disabled?: boolean }) => (
  <SmallButton $wide={wide} $disabled={disabled}>{icon}<span>{label}</span>{caret && <Caret />}</SmallButton>
);
const RibbonDrop = ({ id, value, label, disabled }: { id: string; value: string; label?: string; disabled?: boolean }) => (
  <Stack>
    <RibbonSelect id={id} aria-label={label} disabled={disabled} defaultValue={value}><option>{value}</option></RibbonSelect>
    <ArrowAt $right={4}><Caret c={disabled ? '#777' : INK} /></ArrowAt>
  </Stack>
);
const DropBox = ({ id, value, w, h = 32, icon, open }: { id: string; value: string; w: number; h?: number; icon?: boolean; open?: boolean }) => (
  <Stack>
    <Drop id={id} $w={w} $h={h} $icon={icon} $open={open} defaultValue={value}><option>{value}</option></Drop>
    {icon && <IconAt><ProjectDoc /></IconAt>}
    <ArrowAt $right={6}><Tri c={open ? '#000' : '#444'} /></ArrowAt>
  </Stack>
);
const SelectField = ({ id, label, value, w, h, at }: { id: string; label: string; value: string; w: number; h?: number; at: number }) => (
  <Field $label={at}><label htmlFor={id}><Key text={label} /></label><DropBox id={id} value={value} w={w} h={h} /></Field>
);
const SpinField = ({ id, label, value }: { id: string; label: string; value: number }) => (
  <Field $label={149}>
    <label htmlFor={id}><Key text={label} /></label>
    <Stack>
      <Spin id={id} type="number" defaultValue={value} />
      <ArrowAt $right={8}><Caret up c="#444" /><svg width="10" height="6" /><Caret c="#444" /></ArrowAt>
    </Stack>
  </Field>
);
const Check = ({ label, checked, disabled, tip, w }: { label: string; checked?: boolean; disabled?: boolean; tip?: boolean; w?: number }) => (
  <CheckItem $w={w} $disabled={disabled}>
    <Stack>
      <Box type="checkbox" defaultChecked={checked} disabled={disabled} />
      {checked && <svg width="20" height="20" viewBox="0 0 20 20"><path d="M5 10 8.500 13.500 15 6" fill="none" stroke="#222" strokeWidth="1.800" /></svg>}
    </Stack>
    <span><Key text={label} /></span>
    {tip && <Tip><TipDot /></Tip>}
  </CheckItem>
);

const TitleArea = () => (
  <TitleBar>
    <TitleLines width="720" height="51" viewBox="0 0 720 51" stroke="#595959" strokeWidth="4" fill="none">
      <path d="M10 4 720 26M0 39 720 44M90 50 720 44M160 33 560 28M360 0 520 26 720 46M440 0 640 50M230 51 600 8 640 0M320 51 470 26 590 0M490 0 720 36M545 0 720 20M460 51 560 14M540 51 650 0M610 0 430 51" />
    </TitleLines>
    <QuickAccess>
      <QuickButton $gap={19} aria-label="保存"><svg width="25" height="25" viewBox="0 0 25 25" fill="none" stroke="currentColor" strokeWidth="1.600"><path d="M1 1H24V24H4L1 21ZM5 1V11H20V1M7 24V16H18V24M11 24V20" /></svg></QuickButton>
      <QuickButton aria-label="撤消"><svg width="24" height="25" viewBox="0 0 24 25" fill="none" stroke="currentColor" strokeWidth="1.700"><path d="M2 1V11H12M2 11Q7 1 14 1.500Q22 3 22 11Q22 17 10 24" /></svg></QuickButton>
      <QuickButton $gap={16} aria-label="撤消列表"><Caret /></QuickButton>
      <QuickButton $dim aria-label="恢复"><svg width="24" height="25" viewBox="0 0 24 25" fill="none" stroke="currentColor" strokeWidth="1.700"><path d="M22 1V11H12M22 11Q17 1 10 1.500Q2 3 2 11Q2 17 14 24" /></svg></QuickButton>
      <QuickButton $gap={20} $dim aria-label="恢复列表"><Caret /></QuickButton>
      <QuickButton aria-label="自定义"><svg width="12" height="11" viewBox="0 0 12 11" fill="none" stroke="currentColor" strokeWidth="1.800"><path d="M0 1H12M2 5 6 9 10 5" /></svg></QuickButton>
    </QuickAccess>
    <WindowTitle>{'实验项目.mpp  -  Project Standard'}</WindowTitle>
    <Account>
      <AccountName>传华 李</AccountName>
      <svg width="36" height="36" viewBox="0 0 36 36"><circle cx="18" cy="18" r="18" fill="#d2d2d2" /><g fill="none" stroke="#555" strokeWidth="1.600"><circle cx="18" cy="14" r="6" /><path d="M9 28Q10 20 18 20T27 28" /></g></svg>
      <WindowButton aria-label="最小化"><svg width="16" height="2"><path d="M0 1H16" stroke="currentColor" strokeWidth="2" /></svg></WindowButton>
      <WindowButton aria-label="还原"><svg width="15" height="15" viewBox="0 0 15 15" fill="none" stroke="currentColor" strokeWidth="1.500"><rect x="1" y="4" width="10" height="10" rx="2" /><path d="M4 1H11Q14 1 14 4V11" /></svg></WindowButton>
      <WindowButton aria-label="关闭"><Cross /></WindowButton>
    </Account>
  </TitleBar>
);

const RibbonArea = () => (
  <Ribbon>
    <Tabs>
      {['文件', '任务', '资源', '报表', '项目', '视图', '帮助', '甘特图格式'].map((t, i) => (
        <Tab key={t} $active={i === 5} $dark={i === 7}>{t}</Tab>
      ))}
      <TellMe>
        <svg width="21" height="22" viewBox="0 0 21 22" fill="none" stroke="#333" strokeWidth="1.600"><circle cx="13" cy="8" r="7" /><path d="M8 13 1 21" /></svg>
        操作说明搜索
      </TellMe>
    </Tabs>
    <RibbonBody>
      <Group $right={14}>
        <GroupBody>
          <Big w={62} on caret icon={<GanttBig />} label="甘特图" />
          <Big w={94} icon={<UsageBig />} label="任务" second="分配状况" />
          <SmallColumn $left={6} $right={6}>
            <Small wide icon={<NetSmall />} label="网络图" />
            <Small wide icon={<CalSmall />} label="日历" />
            <Small icon={<OtherSmall />} label="其他视图" />
          </SmallColumn>
        </GroupBody>
        <GroupName>任务视图</GroupName>
      </Group>
      <Rule />
      <Group $left={13} $right={19}>
        <GroupBody>
          <Big w={96} caret icon={<ResourceSheetBig />} label="资源工作表" />
          <SmallColumn $left={5}>
            <Small wide icon={<ResSmall />} label="资源使用状况" />
            <Small icon={<ResSmall />} label="其他视图" />
          </SmallColumn>
        </GroupBody>
        <GroupName>资源视图</GroupName>
      </Group>
      <Rule />
      <Group $left={11} $right={12}>
        <GroupBody>
          <Big w={62} caret icon={<SortBig />} label="排序" />
          <Big w={62} caret icon={<OutlineBig />} label="大纲" />
          <Big w={62} caret icon={<TablesBig />} label="表格" />
          <SmallColumn $left={4}>
            <FieldLine><HighlightSmall /><FieldLabel htmlFor="hl" $w={81}>突出显示:</FieldLabel><RibbonDrop id="hl" value="[非突出显示]" /></FieldLine>
            <FieldLine><FunnelSmall /><FieldLabel htmlFor="flt" $w={81}>筛选器:</FieldLabel><RibbonDrop id="flt" value="[无筛选器]" /></FieldLine>
            <FieldLine><GroupSmall /><FieldLabel htmlFor="grp" $w={81}>分组依据:</FieldLabel><RibbonDrop id="grp" value="[不分组]" /></FieldLine>
          </SmallColumn>
        </GroupBody>
        <GroupName>数据</GroupName>
      </Group>
      <Rule />
      <Group $left={8} $right={12}>
        <GroupBody>
          <SmallColumn $left={3}>
            <FieldLine><FieldLabel htmlFor="ts">时间刻度:</FieldLabel></FieldLine>
            <FieldLine><RibbonDrop id="ts" value="天" /></FieldLine>
          </SmallColumn>
          <Big w={79} caret icon={<ZoomBig />} label="显示比例" />
          <Big w={79} icon={<WholeBig />} label="完整项目" />
          <Big w={79} icon={<SelectedBig />} label="所选任务" />
        </GroupBody>
        <GroupName>显示比例</GroupName>
      </Group>
      <Rule />
      <Group $left={16} $right={11}>
        <GroupBody>
          <div>
            <TickLabel><RibbonTick type="checkbox" />日程表</TickLabel>
            <TickLabel><RibbonTick type="checkbox" />详细信息</TickLabel>
          </div>
          <div>
            <RibbonDrop id="tl" label="日程表视图" value=" " disabled />
            <RibbonDrop id="dt" label="详细信息视图" value=" " disabled />
          </div>
        </GroupBody>
        <GroupName>拆分视图</GroupName>
      </Group>
      <Rule />
      <Group $left={9} $right={21}>
        <GroupBody>
          <Big w={82} icon={<NewWindowBig />} label="新建窗口" />
          <SmallColumn $left={4}>
            <Small disabled icon={<SwitchSmall />} label="切换窗口" />
            <Small caret={false} icon={<ArrangeSmall />} label="全部重排" />
            <Small icon={<HideSmall />} label="隐藏" />
          </SmallColumn>
        </GroupBody>
        <GroupName>窗口</GroupName>
      </Group>
      <Rule />
      <Group>
        <GroupBody><Big w={85} caret icon={<MacroBig />} label="宏" /></GroupBody>
        <GroupName>宏</GroupName>
      </Group>
      <Rule />
      <CollapseRibbon aria-label="折叠功能区"><svg width="15" height="9" viewBox="0 0 15 9"><path d="M1 8 7.500 1.500 14 8" fill="none" stroke={INK} strokeWidth="1.800" /></svg></CollapseRibbon>
    </RibbonBody>
  </Ribbon>
);

const marksMap: Record<string, ReactNode> = { cal: <CalendarMark />, note: <NoteMark />, person: <PersonMark /> };

const SheetArea = () => (
  <SheetPane>
    <Clip>
      <Sheet>
        <colgroup>
          {[78, 81, 120, 146, 471, 224, 224, 94].map((w, i) => <col key={i} width={w} />)}<col />
        </colgroup>
        <thead>
          <tr>
            <HeadCell />
            <HeadCell><HeadFlex $center><InfoDot r={11} /></HeadFlex></HeadCell>
            <HeadCell><HeadFlex>任务模式<Tri c="#f0f0f0" s={11} /></HeadFlex></HeadCell>
            <HeadCell><HeadFlex>工期<Tri c="#f0f0f0" s={11} /></HeadFlex></HeadCell>
            <HeadCell><HeadFlex>关于XX小区X号楼</HeadFlex></HeadCell>
            <HeadCell /><HeadCell /><HeadCell /><HeadCell />
          </tr>
        </thead>
        <tbody>
          {tasks.map(t => (
            <TaskRow key={t.id} $tall={t.tall} $bold={t.bold} $color={t.color} $fill={t.fill} $active={t.id === 21} $root={t.id === 0}>
              <RowHead scope="row" $active={t.id === 21}>{t.id}</RowHead>
              <PlainCell $indent={1}><CellIcons>{t.marks?.map(m => <Fragment key={m}>{marksMap[m]}</Fragment>)}</CellIcons></PlainCell>
              <ModeCell $indent={4} $lit={t.id === 2}><CellIcons $top={5}><ModeIcon /></CellIcons></ModeCell>
              <Cell $indent={2}>{t.dur}</Cell>
              <Cell $indent={2 + 16 * t.indent}>
                <NameLine>
                  <Toggle>{t.parent && <svg width="9" height="9"><path d="M8 0V8H0Z" fill="#444" stroke="#222" /></svg>}</Toggle>
                  {t.name}
                </NameLine>
              </Cell>
              <Cell $indent={2}>{t.start}</Cell>
              <Cell $indent={2}>{t.end}</Cell>
              <Cell /><Cell />
            </TaskRow>
          ))}
        </tbody>
      </Sheet>
    </Clip>
    <HBar>
      <ScrollButton aria-label="向左"><Tri dir="left" /></ScrollButton>
      <Track $grow={840} $thumb /><Track $grow={728} />
      <ScrollButton aria-label="向右"><Tri dir="right" /></ScrollButton>
    </HBar>
  </SheetPane>
);

const dayNames = ['一', '二', '三', '四', '五', '六', '日'];
const weeks: [number, string][] = [[93, ''], [217, '2025年4月28日'], [217, '2025年5月5日'], [217, '2025年5月12日'], [217, '2025年5月19日']];

const GanttArea = () => {
  const weekLine = (n: number) => n % 7 === 0 && n > 0;
  const days = Array.from({ length: 60 }, (_, i) => i - 2);
  return (
    <GanttPane>
      <GanttMain>
        <Timescale>
          <ScaleTier $h={26} $left={185}><ScaleCell $w={961}>2025年5月</ScaleCell></ScaleTier>
          <ScaleTier $h={26}>{weeks.map(([w, t], i) => <ScaleCell key={i} $w={w} $tick>{t}</ScaleCell>)}</ScaleTier>
          <ScaleTier $h={25}>
            {Array.from({ length: 28 }, (_, i) => <ScaleCell key={i} $w={31} $tick>{dayNames[(i + 4) % 7]}</ScaleCell>)}
          </ScaleTier>
        </Timescale>
        <Clip>
          <Chart shapeRendering="crispEdges">
            <defs>
              <pattern id="off" width="4" height="4" patternUnits="userSpaceOnUse">
                <rect width="4" height="4" fill="#fff" />
                {[[0, 0], [1, 1], [2, 2], [3, 3], [1, 3], [3, 1]].map(([x, y]) => <rect key={`${x}${y}`} x={x} y={y} width="1" height="1" fill="#fac4c4" />)}
              </pattern>
            </defs>
            {holidays.map(([n, len]) => <rect key={n} x={dx(n)} y="0" width={DAY * len} height="100%" fill="url(#off)" />)}
            {tasks.map((t, i) => (
              <rect key={t.id} x="0" y={rowTop[i] + (t.tall ? 59 : 30)} width="100%" height="1" fill={t.id === 20 || t.id === 21 ? '#777' : '#000'} />
            ))}
            {days.map(n => {
              const x = dx(n) + 0.5;
              if (weekLine(n)) return <path key={n} d={`M${x} 0V1020`} stroke="#4472c4" />;
              if (n === 12) return null;
              if (n === 0 || n === 19) return <path key={n} d={`M${x} 0V1020`} stroke="#888" strokeDasharray="2 3" />;
              if (n === 3) return <path key={n} d={`M${x} 0V1020`} stroke="#3f8a3a" strokeDasharray="2 2" />;
              return <path key={n} d={`M${x} 0V1020`} stroke="#c55a11" strokeDasharray="5 4" />;
            })}
            <path d={`M${dx(5)} ${rowTop[12] + 18.5}H${dx(15)}`} stroke="#5b9bd5" strokeDasharray="1 3" />
            {bars.map((b, i) => (
              <g key={i}>
                <rect x={dx(b.from)} y={rowTop[b.row] + 3} width={(b.to - b.from) * DAY + 1} height="17" fill="#8ab9ea" />
                {b.label && <BarLabel x={dx(b.to) + 12} y={rowTop[b.row] + 19}>{b.label}</BarLabel>}
              </g>
            ))}
            {summaries.map(s => (
              <path key={s.row} d={`M${dx(s.from)} ${rowTop[s.row] + 20}V${rowTop[s.row] + 4}H${dx(s.to)}V${rowTop[s.row] + 20}`} fill="none" stroke={s.c} strokeWidth="2" />
            ))}
            <path d={`M${dx(9)} ${rowTop[22] + 4}l8 8-8 8-8-8z`} fill="#595959" shapeRendering="auto" />
            <BarLabel x={dx(9) + 20} y={rowTop[22] + 19}>5/6</BarLabel>
            <path d={`M${dx(12) + 0.5} 0V1020`} stroke="#7fb27a" />
            <path d={`M${dx(5)} ${rowTop[5] + 11.5}H${dx(8) + 0.5}V${rowTop[9]}`} fill="none" stroke="#2b7cd3" />
            {[6, 9].map(r => <path key={r} d={`M${dx(8) - 6} ${rowTop[r] - 4}h13l-6 7z`} fill="#2b7cd3" shapeRendering="auto" />)}
          </Chart>
        </Clip>
        <HBar>
          <ScrollButton aria-label="向左"><Tri dir="left" /></ScrollButton>
          <Track $grow={60} /><Track $grow={397} $thumb /><Track $grow={338} />
          <ScrollButton aria-label="向右"><Tri dir="right" /></ScrollButton>
        </HBar>
      </GanttMain>
      <GanttSide>
        <VBar>
          <ScrollButton aria-label="向上"><Tri dir="up" /></ScrollButton>
          <Track $grow={556} $thumb /><Track $grow={479} />
          <ScrollButton aria-label="向下"><Tri /></ScrollButton>
        </VBar>
        <SideCorner />
      </GanttSide>
    </GanttPane>
  );
};

const OptionsDialog = () => (
  <Overlay>
    <Dialog role="dialog" aria-label="Project 选项">
      <DialogTitle>
        <DialogName>Project 选项</DialogName>
        <DialogButton aria-label="帮助">?</DialogButton>
        <DialogButton aria-label="关闭"><Cross s={16} /></DialogButton>
      </DialogTitle>
      <DialogBody>
        <Nav>
          {['常规', '显示', '日程', '校对', '保存', '语言', '高级'].map(n => <NavItem key={n} $on={n === '日程'}>{n}</NavItem>)}
          <NavRule />
          <NavItem>自定义功能区</NavItem>
          <NavItem>快速访问工具栏</NavItem>
          <NavRule />
          <NavItem>加载项</NavItem>
          <NavItem>信任中心</NavItem>
        </Nav>
        <Panel>
          <PanelScroll>
            <Intro><IntroIcon />更改与日程排定、日历和计算有关的选项。</Intro>
            <Section $h={34}><SectionLabel htmlFor="calfor"><Key text="该项目的日历选项(I):" /></SectionLabel><DropBox id="calfor" icon w={189} value="实验项目.mpp" /></Section>
            <Fields $top={15}>
              <SelectField id="week" label="每周开始于(W):" value="星期一" w={96} at={167} />
              <SelectField id="fy" label="财政年度开始于(F):" value="一月" w={96} at={167} />
            </Fields>
            <CheckLine $top={9} $left={103}><Check disabled label="财政年度以开始年度编号(U)" /></CheckLine>
            <FieldSplit>
              <Fields $top={19}>
                <SelectField id="ds" label="默认开始时间(S):" value="8:00" w={90} h={31} at={149} />
                <SelectField id="de" label="默认结束时间(E):" value="17:00" w={90} h={31} at={149} />
                <SpinField id="hd" label="每日工时(D):" value={8} />
                <SpinField id="hw" label="每周工时(H):" value={40} />
                <SpinField id="dm" label="每月工作日(M):" value={20} />
              </Fields>
              <Note>当您输入开始日期或结束日期而不指定时间时，这些时间会被分配给任务。如果要更改此设置，请考虑使用功能区中“项目”选项卡上的“更改工作时间”命令来匹配项目日历。</Note>
            </FieldSplit>
            <Section $h={37} $top={21}><SectionTitle>日程</SectionTitle></Section>
            <CheckLine $top={18}><Check checked tip label="显示日程排定信息(O)" /></CheckLine>
            <Fields $top={13}>
              <SelectField id="units" label="工作分配单位显示为(A):" value="百分比" w={96} at={206} />
            </Fields>
            <Section $h={34} $top={27}><SectionLabel htmlFor="schfor"><Key text="该项目的日程排定选项(L):" /></SectionLabel><DropBox id="schfor" icon w={189} value="实验项目.mpp" /></Section>
            <Fields $top={15}>
              <SelectField id="new" label="新任务创建于(N):" value="自动计划" w={114} at={224} />
              <SelectField id="auto" label="自动计划任务排定日期(A):" value="项目开始日期" w={150} at={224} />
              <SelectField id="du" label="工期显示单位(R):" value="天" w={96} at={224} />
              <SelectField id="wu" label="工时显示单位(K):" value="小时数" w={96} at={224} />
              <Field $label={224}>
                <label htmlFor="tt"><Key text="默认任务类型(T):" /></label>
                <PopupAnchor>
                  <Popup role="listbox" aria-label="默认任务类型">
                    {['固定单位', '固定工期', '固定工时'].map(o => <PopupOption key={o} role="option" aria-selected={o === '固定工期'} $on={o === '固定工期'}>{o}</PopupOption>)}
                  </Popup>
                  <DropBox id="tt" value="固定工期" w={114} open />
                </PopupAnchor>
              </Field>
            </Fields>
            <CheckLine $top={15}>
              <Check w={342} tip label="新任务为投入比导向(V)" />
              <Check checked tip label="任务将始终接受其限制日期(Y)" />
            </CheckLine>
            <CheckLine $top={16}>
              <Check w={342} tip label="自动链接插入或移动的任务(K)" />
              <Check tip label="显示有估计工期的计划任务(S)" />
            </CheckLine>
          </PanelScroll>
          <VBar>
            <ScrollButton aria-label="向上"><Tri dir="up" /></ScrollButton>
            <Track $grow={488} $thumb /><Track $grow={364} />
            <ScrollButton aria-label="向下"><Tri /></ScrollButton>
          </VBar>
        </Panel>
      </DialogBody>
      <DialogFooter>
        <FooterButton>确定</FooterButton>
        <FooterButton>取消</FooterButton>
      </DialogFooter>
      <Grip width="12" height="12" viewBox="0 0 12 12" fill="#c8c8c8"><path d="M8 0h3v3H8zM8 4h3v3H8zM8 8h3v3H8zM4 4h3v3H4zM4 8h3v3H4zM0 8h3v3H0z" /></Grip>
    </Dialog>
  </Overlay>
);

export default function App() {
  return (
    <App_>
      <Global />
      <TitleArea />
      <RibbonArea />
      <EntryBar>
        <EntryActions>
          <svg width="12" height="11" viewBox="0 0 12 11"><path d="M1 1 11 10M11 1 1 10" stroke="#c8372c" strokeWidth="2" /></svg>
          <svg width="14" height="11" viewBox="0 0 14 11"><path d="M1 6 5 10 13 1" fill="none" stroke="#2e75b6" strokeWidth="2" /></svg>
        </EntryActions>
        <EntryFrame><EntryInput aria-label="输入栏" defaultValue="设计师[50%]" /></EntryFrame>
      </EntryBar>
      <Work>
        <ViewBar>
          {views.map(([name, kind], i) => <ViewItem key={name} $on={i === 0}><ViewIcon kind={kind} />{name}</ViewItem>)}
          <ViewItem aria-label="资源图表"><ViewIcon kind="graph-res" /></ViewItem>
          <ViewMore aria-label="更多视图"><Tri c="#000" s={9} /></ViewMore>
        </ViewBar>
        <SheetArea />
        <Splitter />
        <GanttArea />
      </Work>
      <StatusBar>
        <StatusText $right={46}>忙碌</StatusText>
        <svg width="26" height="20" viewBox="0 0 26 20" fill="none" stroke={INK} strokeWidth="1.700"><path d="M7 14H1V3H21V8M10 14H23M17 8 23 14 17 19" /></svg>
        <StatusText>新任务: 自动计划</StatusText>
        <StatusViews>{[0, 1, 2, 3, 4].map(k => <StatusView key={k} $on={k === 0}><StatusIcon k={k} /></StatusView>)}</StatusViews>
        <Zoom>
          <svg width="12" height="12"><path d="M0 6H12" stroke={INK} strokeWidth="1.700" /></svg>
          <ZoomRange type="range" aria-label="显示比例" defaultValue={68} />
          <svg width="12" height="12"><path d="M0 6H12M6 0V12" stroke={INK} strokeWidth="1.700" /></svg>
        </Zoom>
      </StatusBar>
      <OptionsDialog />
      <Watermark>CSDN @害羞的白菜</Watermark>
    </App_>
  );
}
